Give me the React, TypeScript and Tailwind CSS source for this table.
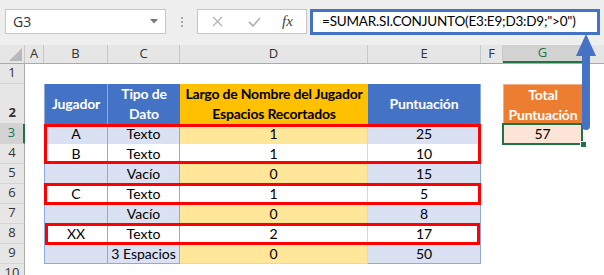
const hdrFont = "font-['Open_Sans',sans-serif] text-[13px] text-[#333]";

type DataRow = { n: number; cells: string[]; band: boolean };

const rows: DataRow[] = [
  { n: 3, cells: ["A", "Texto", "1", "25"], band: true },
  { n: 4, cells: ["B", "Texto", "1", "10"], band: false },
  { n: 5, cells: ["", "Vacío", "0", "15"], band: true },
  { n: 6, cells: ["C", "Texto", "1", "5"], band: false },
  { n: 7, cells: ["", "Vacío", "0", "8"], band: true },
  { n: 8, cells: ["XX", "Texto", "2", "17"], band: false },
  { n: 9, cells: ["", "3 Espacios", "0", "50"], band: true },
];

const RowHead = ({ n, active = false }: { n: number; active?: boolean }) => (
  <div
    className={
      "w-[25px] shrink-0 h-full flex items-end justify-center pb-[1px] border-b border-[#D4D4D4] " +
      hdrFont +
      (active
        ? " bg-[#D2D2D2] border-r-2 border-r-[#217346] !text-[#217346]"
        : " bg-[#E6E6E6] border-r border-r-[#ABABAB]")
    }
  >
    {n}
  </div>
);

const Toolbar = () => (
  <div className="h-[45px] bg-[#EEEEEE] flex items-start pt-[9px] pl-[5px]">
    <div className="w-[161px] h-[25px] bg-white border border-[#C6C6C6] flex items-center justify-between pl-[7px] pr-[7px]">
      <span className="font-['Open_Sans',sans-serif] text-[14px] text-[#333]">G3</span>
      <svg width="8" height="5" viewBox="0 0 8 5">
        <path d="M0 0H8L4 4.5Z" fill="#777" />
      </svg>
    </div>
    <div className="w-[31px] h-[25px] flex flex-col items-center justify-center gap-[2px]">
      <div className="w-[2px] h-[2px] bg-[#A8A8A8]" />
      <div className="w-[2px] h-[2px] bg-[#A8A8A8]" />
      <div className="w-[2px] h-[2px] bg-[#A8A8A8]" />
    </div>
    <div className="w-[110px] h-[25px] bg-white border border-[#C6C6C6] flex items-center pl-[14px]">
      <svg width="11" height="11" viewBox="0 0 11 11">
        <path d="M1 1L10 10M10 1L1 10" stroke="#B5B5B5" strokeWidth="1.4" />
      </svg>
      <svg className="ml-[25px]" width="13" height="10" viewBox="0 0 13 10">
        <path d="M1 5L5 9L12 1" stroke="#B5B5B5" strokeWidth="1.8" fill="none" />
      </svg>
      <span className="ml-[21px] font-['Liberation_Serif',serif] italic text-[15px] text-[#444] leading-none">
        fx
      </span>
    </div>
    <div className="ml-[3px] w-[290px] h-[26px] border-[3px] border-[#4472C4] bg-white flex items-center pl-[9px]">
      <span className="text-[13.5px] tracking-[-0.2px] whitespace-nowrap text-black leading-none">
        =SUMAR.SI.CONJUNTO(E3:E9;D3:D9;"&gt;0")
      </span>
    </div>
  </div>
);

const ColumnHeader = () => {
  const cols: [string, string][] = [
    ["A", "w-[19px]"],
    ["B", "w-[64px]"],
    ["C", "w-[72px]"],
    ["D", "w-[188px]"],
    ["E", "w-[113px]"],
    ["F", "w-[22px]"],
  ];
  return (
    <div className={"h-[19px] flex bg-[#E6E6E6] border-b border-[#ABABAB] " + hdrFont}>
      <div className="w-[25px] shrink-0 border-r border-[#C8C8C8] flex items-end justify-end pr-[2px] pb-[2px]">
        <svg width="13" height="13" viewBox="0 0 13 13">
          <path d="M13 0V13H0Z" fill="#B9B9B9" />
        </svg>
      </div>
      {cols.map(([c, w]) => (
        <div key={c} className={w + " shrink-0 border-r border-[#C8C8C8] flex items-center justify-center"}>
          {c}
        </div>
      ))}
      <div className="w-[79px] shrink-0 bg-[#D2D2D2] border-b-2 border-[#217346] text-[#217346] flex items-center justify-center">
        G
      </div>
      <div className="flex-1 border-l border-[#C8C8C8]" />
    </div>
  );
};

const HeaderRow = () => (
  <div className="h-[40px] flex font-bold leading-[20px] text-[14px] tracking-[-0.2px] whitespace-nowrap">
    <RowHead n={2} />
    <div className="w-[19px] shrink-0" />
    <div className="w-[64px] shrink-0 bg-[#4472C4] text-white border-l border-r border-[#8EA9DB] flex items-center justify-center">
      Jugador
    </div>
    <div className="w-[72px] shrink-0 bg-[#4472C4] text-white flex flex-col items-center justify-center">
      <span>Tipo de</span>
      <span>Dato</span>
    </div>
    <div className="w-[188px] shrink-0 bg-[#FFC000] text-black flex flex-col items-center justify-center">
      <span>Largo de Nombre del Jugador</span>
      <span>Espacios Recortados</span>
    </div>
    <div className="w-[113px] shrink-0 bg-[#4472C4] text-white border-r border-[#8EA9DB] flex items-center justify-center">
      Puntuación
    </div>
    <div className="w-[22px] shrink-0" />
    <div className="w-[79px] shrink-0 bg-[#ED7D31] text-white border-l border-t border-[#F4B084] flex flex-col items-center justify-center">
      <span>Total</span>
      <span>Puntuación</span>
    </div>
  </div>
);

const Row = ({ r }: { r: DataRow }) => {
  const last = r.n === 9;
  const blue = r.band ? "bg-[#D9E1F2]" : "bg-white";
  const yellow = r.band ? "bg-[#FFE699]" : "bg-white";
  const bb = last ? " border-b border-b-[#8EA9DB]" : "";
  return (
    <div className="h-[20px] flex leading-[20px] text-[14px] whitespace-nowrap">
      <RowHead n={r.n} active={r.n === 3} />
      <div className="w-[19px] shrink-0" />
      <div className={"w-[64px] shrink-0 text-center border-l border-r border-[#8EA9DB] " + blue + bb}>{r.cells[0]}</div>
      <div className={"w-[72px] shrink-0 text-center border-r border-[#8EA9DB] " + blue + bb}>{r.cells[1]}</div>
      <div className={"w-[188px] shrink-0 text-center border-r border-[#FFD966] " + yellow + (last ? " border-b border-b-[#FFD966]" : "")}>
        {r.cells[2]}
      </div>
      <div className={"w-[113px] shrink-0 text-center border-r border-[#8EA9DB] " + blue + bb}>{r.cells[3]}</div>
      <div className="w-[22px] shrink-0" />
      {r.n === 3 ? (
        <div className="w-[79px] shrink-0 text-center bg-[#FCE4D6]">57</div>
      ) : (
        <div className="w-[79px] shrink-0" />
      )}
    </div>
  );
};

export default function App() {
  return (
    <div className="w-[604px] h-[275px] overflow-hidden bg-white relative font-['Lato',sans-serif] text-[15px] text-black">
      <Toolbar />
      <ColumnHeader />
      <div className="h-[20px] flex">
        <RowHead n={1} />
      </div>
      <HeaderRow />
      {rows.map((r) => (
        <Row key={r.n} r={r} />
      ))}
      <div className="h-[20px] flex">
        <RowHead n={10} />
      </div>

      {/* annotation boxes */}
      <div className="absolute left-[44px] top-[124px] w-[437px] h-[40px] border-[3px] border-[#FF0000]" />
      <div className="absolute left-[44px] top-[183px] w-[437px] h-[22px] border-[3px] border-[#FF0000]" />
      <div className="absolute left-[45px] top-[223px] w-[435px] h-[22px] border-[3px] border-[#FF0000]" />

      {/* selection on G3 */}
      <div className="absolute left-[502px] top-[123px] w-[81px] h-[22px] border-2 border-[#217346]" />
      <div className="absolute left-[580px] top-[141px] w-[7px] h-[7px] bg-[#217346] border border-white" />

      {/* arrow */}
      <svg className="absolute left-[574px] top-[34px]" width="24" height="98" viewBox="0 0 24 98">
        <path d="M12 0L2 22H22Z" fill="#4472C4" />
        <path d="M8 20H16V92A4 4 0 0 1 8 92Z" fill="#4472C4" />
      </svg>
    </div>
  );
}
